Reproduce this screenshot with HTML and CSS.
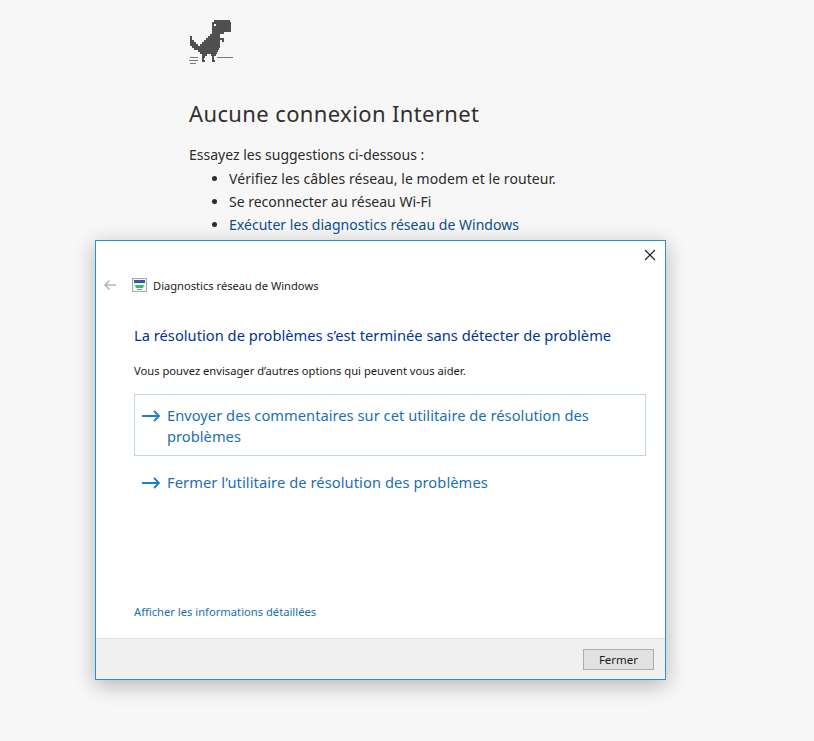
FILE: index.html
```html
<!DOCTYPE html>
<html lang="fr">
<head>
    <meta charset="UTF-8">
    <meta name="viewport" content="width=device-width, initial-scale=1.0">
    <title>Aucune connexion Internet</title>
    <link rel="stylesheet" href="styles.css">
</head>
<body>
    <div class="error-page">
        <svg class="dino" width="48" height="46" viewBox="0 0 24 23" shape-rendering="crispEdges">
            <path fill="#505050" d="M14 0h8v1h-8zM13 1h9.500v5h-9.500zM13 6h6v1h-6zM12 7h5v1h-5zM2 8h1v1h-1zM11 8h6v1h-6zM2 9h1v1h-1zM10 9h9v1h-9zM2 10h2v1h-2zM9 10h8v1h-8zM18 10h1v1h-1zM2 11h3v1h-3zM8 11h9v1h-9zM2 12h4v1h-4zM7 12h10v1h-10zM3 13h14v1h-14zM4 14h12.500v1h-12.500zM6 15h10v1h-10zM7 16h8.500v1h-8.500zM8 17h2.500v1h-2.500zM12.500 17h2.500v1h-2.500zM8 18h1.500v1h-1.500zM13 18h1v1h-1zM8 19h1v1h-1zM13 19h1v1h-1zM8 20h1.500v1h-1.500zM13 20h1.500v1h-1.500z"/>
            <rect x="14" y="2" width="1" height="1" fill="#f7f7f7"/>
            <path fill="#777" d="M15.500 18.500h8v.5h-8zM2 18.500h4v.5h-4zM1.500 20h4.500v.5h-4.500zM2 21.500h3v.5h-3z"/>
        </svg>

        <h1 class="error-title">Aucune connexion Internet</h1>

        <p class="error-intro">Essayez les suggestions ci-dessous :</p>
        <ul class="suggestions">
            <li>Vérifiez les câbles réseau, le modem et le routeur.</li>
            <li>Se reconnecter au réseau Wi-Fi</li>
            <li><a href="#">Exécuter les diagnostics réseau de Windows</a></li>
        </ul>
    </div>

    <div class="dialog">
        <div class="dialog-close">
            <svg width="12" height="12" viewBox="0 0 12 12"><path d="M1 1l10 10M11 1L1 11" stroke="#222" stroke-width="1.200" fill="none"/></svg>
        </div>

        <div class="dialog-nav">
            <svg class="back-arrow" width="14" height="12" viewBox="0 0 14 12"><path d="M13 6H2M6.500 1.500L2 6l4.500 4.500" stroke="#b4b4b4" stroke-width="1.500" fill="none"/></svg>
            <svg class="nav-icon" width="15" height="14" viewBox="0 0 15 14">
                <rect x=".5" y=".5" width="14" height="13" fill="#f6f6f6" stroke="#a8a8a8"/>
                <rect x="2" y="2" width="11" height="3" fill="#2f5aa8"/>
                <path d="M3 7h9l-1 3H4z" fill="#43b85a"/>
                <rect x="5" y="11" width="5" height="1" fill="#8a8a8a"/>
            </svg>
            <span class="nav-title">Diagnostics réseau de Windows</span>
        </div>

        <div class="dialog-body">
            <h2 class="dialog-heading">La résolution de problèmes s’est terminée sans détecter de problème</h2>
            <p class="dialog-text">Vous pouvez envisager d’autres options qui peuvent vous aider.</p>

            <a class="command command-focus" href="#">
                <svg class="command-arrow" width="18" height="14" viewBox="0 0 18 14"><path d="M0 7h17M12 2l5 5-5 5" stroke="#1a7fcc" stroke-width="1.800" fill="none"/></svg>
                <span>Envoyer des commentaires sur cet utilitaire de résolution des problèmes</span>
            </a>
            <a class="command command-plain" href="#">
                <svg class="command-arrow" width="18" height="14" viewBox="0 0 18 14"><path d="M0 7h17M12 2l5 5-5 5" stroke="#1a7fcc" stroke-width="1.800" fill="none"/></svg>
                <span>Fermer l’utilitaire de résolution des problèmes</span>
            </a>

            <a class="details-link" href="#">Afficher les informations détaillées</a>
        </div>

        <div class="dialog-footer">
            <button class="close-btn">Fermer</button>
        </div>
    </div>
</body>
</html>
```

FILE: styles.css
```css
* {
    margin: 0;
    padding: 0;
    box-sizing: border-box;
}

body {
    background: #f7f7f7;
    height: 741px;
    overflow: hidden;
    font-family: "Noto Sans", "Open Sans", sans-serif;
    color: #2b2b2b;
    position: relative;
}

a {
    text-decoration: none;
}

.error-page {
    padding: 20px 0 0 189px;
}

.dino {
    display: block;
    margin-left: -3px;
}

.error-title {
    margin-top: 32px;
    font-size: 22px;
    line-height: 30px;
    font-weight: 400;
    letter-spacing: 0.38px;
    color: #303030;
}

.error-intro {
    margin-top: 15px;
    font-size: 14px;
    line-height: 24px;
}

.suggestions {
    padding-left: 40px;
    font-size: 14px;
    line-height: 23px;
}

.suggestions li:first-child {
    letter-spacing: 0.06px;
}

.suggestions a {
    color: #0b4f8a;
    letter-spacing: 0.03px;
}

.dialog {
    position: absolute;
    left: 95px;
    top: 240px;
    width: 571px;
    height: 440px;
    background: #fff;
    border: 1px solid #2a8fd4;
    box-shadow: 0 5px 20px rgba(0, 0, 0, 0.28);
    display: flex;
    flex-direction: column;
}

.dialog-close {
    height: 28px;
    display: flex;
    justify-content: flex-end;
    align-items: center;
    padding: 0 9px 0 0;
}

.dialog-nav {
    height: 32px;
    display: flex;
    align-items: center;
    padding-left: 7px;
}

.back-arrow {
    margin-right: 15px;
}

.nav-icon {
    margin-right: 6px;
}

.nav-title {
    font-size: 11.150px;
    color: #1c1c1c;
}

.dialog-body {
    flex: 1;
    padding: 0 19px 0 38px;
    display: flex;
    flex-direction: column;
}

.dialog-heading {
    margin-top: 22px;
    font-size: 14.650px;
    line-height: 24px;
    font-weight: 400;
    letter-spacing: 0.03px;
    color: #003399;
}

.dialog-text {
    margin-top: 16px;
    font-size: 11.200px;
    line-height: 16px;
    color: #1c1c1c;
}

.command {
    display: flex;
    align-items: flex-start;
    gap: 7px;
    padding: 10px 8px 8px 7px;
    font-size: 14.650px;
    line-height: 21px;
    letter-spacing: 0.04px;
    color: #1a6fb5;
    border: 1px solid transparent;
}

.command-focus {
    margin-top: 15px;
    border-color: #bcd8e8;
}

.command-plain {
    margin-top: 5px;
    letter-spacing: 0.09px;
}

.command-arrow {
    flex: none;
    margin-top: 4px;
}

.details-link {
    margin-top: auto;
    margin-bottom: 18px;
    font-size: 11.200px;
    line-height: 16px;
    color: #1a6fb5;
}

.dialog-footer {
    height: 41px;
    background: #f0f0f0;
    border-top: 1px solid #dfdfdf;
    display: flex;
    justify-content: flex-end;
    align-items: center;
    padding-right: 11px;
}

.close-btn {
    width: 71px;
    height: 21px;
    background: #e1e1e1;
    border: 1px solid #adadad;
    font-family: inherit;
    font-size: 11.500px;
    color: #1c1c1c;
}
```
